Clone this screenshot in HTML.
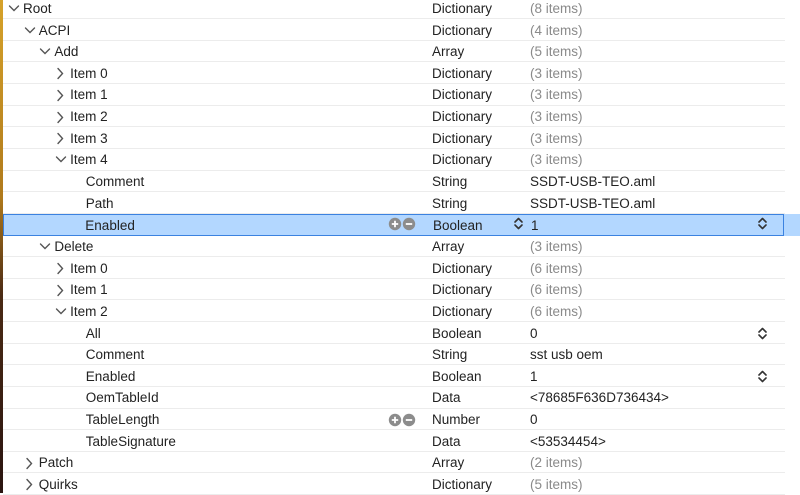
<!DOCTYPE html>
<html><head><meta charset="utf-8"><style>
*{margin:0;padding:0;box-sizing:border-box}
body{width:800px;height:493px;overflow:hidden;background:#fff;font-family:"Liberation Sans",sans-serif;font-size:13.5px;color:#222;position:relative}
.strip{position:absolute;left:0;top:0;width:3px;height:493px;background:linear-gradient(#d6a22a 0%,#b07a1c 40%,#4a2a14 60%,#2a1410 100%)}
.row{position:absolute;left:3px;width:782px;height:21.64px;border-bottom:1px solid #ececec}
.row span{position:absolute;top:3.5px;white-space:nowrap}
.t{left:429px}.v{left:527px}
.g{color:#8a8a8a}
.sel{background:#b3d7ff;border:1.5px solid #3b82e0;width:781px}
.selext{position:absolute;left:784px;width:16px;background:#b3d7ff}
svg{position:absolute}
</style></head><body>
<div class="strip"></div>
<div id="c"></div>
<script>
const R=[
[0,'v','Root','Dictionary','(8 items)',1],
[1,'v','ACPI','Dictionary','(4 items)',1],
[2,'v','Add','Array','(5 items)',1],
[3,'>','Item 0','Dictionary','(3 items)',1],
[3,'>','Item 1','Dictionary','(3 items)',1],
[3,'>','Item 2','Dictionary','(3 items)',1],
[3,'>','Item 3','Dictionary','(3 items)',1],
[3,'v','Item 4','Dictionary','(3 items)',1],
[4,'','Comment','String','SSDT-USB-TEO.aml',0],
[4,'','Path','String','SSDT-USB-TEO.aml',0],
[4,'','Enabled','Boolean','1',0,'sel'],
[2,'v','Delete','Array','(3 items)',1],
[3,'>','Item 0','Dictionary','(6 items)',1],
[3,'>','Item 1','Dictionary','(6 items)',1],
[3,'v','Item 2','Dictionary','(6 items)',1],
[4,'','All','Boolean','0',0,'st'],
[4,'','Comment','String','sst usb oem',0],
[4,'','Enabled','Boolean','1',0,'st'],
[4,'','OemTableId','Data','<78685F636D736434>',0],
[4,'','TableLength','Number','0',0,'pm'],
[4,'','TableSignature','Data','<53534454>',0],
[1,'>','Patch','Array','(2 items)',1],
[1,'>','Quirks','Dictionary','(5 items)',1]];
const H=21.64,T0=-2.6;let h='';
const step=(x,y)=>`<svg style="left:${x}px;top:${y}px" width="11" height="15" viewBox="0 0 11 15"><path d="M2 6L5.5 2.5L9 6M2 9L5.5 12.5L9 9" fill="none" stroke="#333" stroke-width="1.6" stroke-linecap="round" stroke-linejoin="round"/></svg>`;
const pm=(y)=>`<svg style="left:385px;top:${y}px" width="30" height="14" viewBox="0 0 30 14"><circle cx="7" cy="7" r="6.2" fill="#8c8c8c"/><path d="M3.8 7H10.2M7 3.8V10.2" stroke="#fff" stroke-width="1.8"/><circle cx="21" cy="7" r="6.2" fill="#8c8c8c"/><path d="M17.8 7H24.2" stroke="#fff" stroke-width="1.8"/></svg>`;
R.forEach((r,i)=>{const top=T0+i*H;const[l,ch,k,t,v,g,x]=r;const tx=20+15.7*l;
let inner='';
if(ch=='v')inner+=`<svg style="left:${tx-15}px;top:6.5px" width="12" height="9" viewBox="0 0 12 9"><path d="M1.5 2L6 6.5L10.5 2" fill="none" stroke="#555" stroke-width="1.4" stroke-linecap="round"/></svg>`;
if(ch=='>')inner+=`<svg style="left:${tx-14}px;top:5px" width="9" height="13" viewBox="0 0 9 13"><path d="M2 1.5L6.5 6.5L2 11.5" fill="none" stroke="#555" stroke-width="1.4" stroke-linecap="round"/></svg>`;
inner+=`<span style="left:${tx}px">${k}</span><span class="t">${t}</span><span class="v${g?' g':''}">${v.replace(/</g,'&lt;')}</span>`;
if(x=='sel'){inner+=pm(3.5)+step(510,3)+step(754,3);}
if(x=='st')inner+=step(754,3.5);
if(x=='pm')inner+=pm(4);
if(x=='sel'){h+=`<div class="row sel" style="top:${top}px;height:${H+1}px">${inner.replace(/left:(\d+(\.\d+)?)px/g,(m,a)=>'left:'+(a-1.5)+'px').replace(/top:(\d+(\.\d+)?)px/g,(m,a)=>'top:'+(a-1.5)+'px')}</div><div class="selext" style="top:${top}px;height:${H+1}px"></div>`;}
else h+=`<div class="row" style="top:${top}px">${inner}</div>`;});
document.getElementById('c').innerHTML=h;
</script>
</body></html>
